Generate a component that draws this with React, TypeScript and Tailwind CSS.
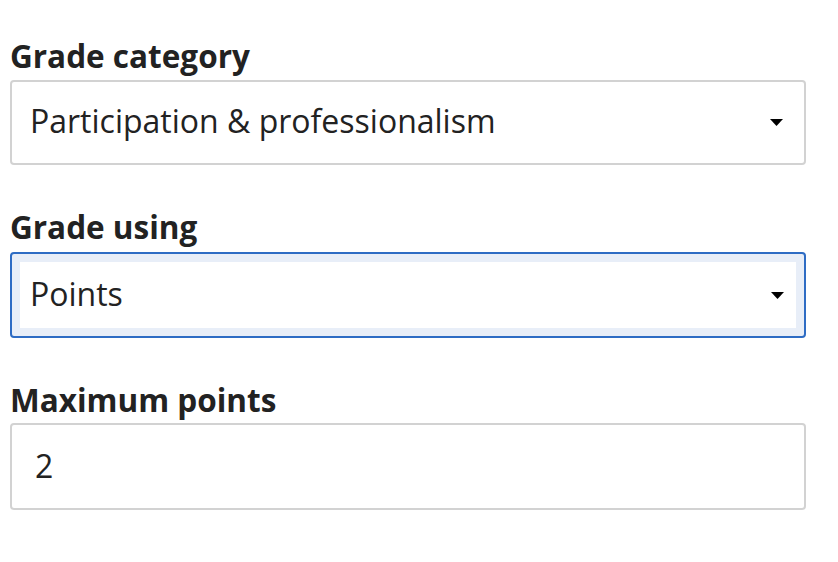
import React from "react";

const font = { fontFamily: '"Open Sans", "Noto Sans", sans-serif' };

function Caret() {
  return (
    <svg width="13" height="7" viewBox="0 0 13 7" className="shrink-0">
      <path d="M0 0 H13 L6.5 7 Z" fill="#000" />
    </svg>
  );
}

export default function App() {
  return (
    <div className="w-[838px] h-[562px] bg-white pl-[10px] pr-[32px] pt-[35px] text-[#222]" style={font}>
      <label className="block text-[31.5px] font-bold leading-[41px]">Grade category</label>
      <div className="mt-[4px] h-[85px] flex items-center justify-between border-2 border-[#d2d2d2] rounded-[4px] pl-[18px] pr-[21px]">
        <span className="text-[32px] leading-[41px] pb-[5px]">Participation &amp; professionalism</span>
        <Caret />
      </div>

      <label className="block mt-[41px] text-[31.5px] font-bold leading-[41px]">Grade using</label>
      <div className="mt-[5px] h-[86px] border-2 border-[#2e6cc4] rounded-[4px] bg-[#e8eef8] p-[8px]">
        <div className="h-full bg-white flex items-center justify-between pl-[10px] pr-[12px]">
          <span className="text-[32px] leading-[41px] pb-[4px]">Points</span>
          <Caret />
        </div>
      </div>

      <label className="block mt-[41px] text-[31.5px] font-bold leading-[41px]">Maximum points</label>
      <div className="mt-[3px] h-[87px] flex items-center border-2 border-[#d2d2d2] rounded-[4px] pl-[23px]">
        <span className="text-[32px] leading-[41px] pb-[2px]">2</span>
      </div>
    </div>
  );
}
